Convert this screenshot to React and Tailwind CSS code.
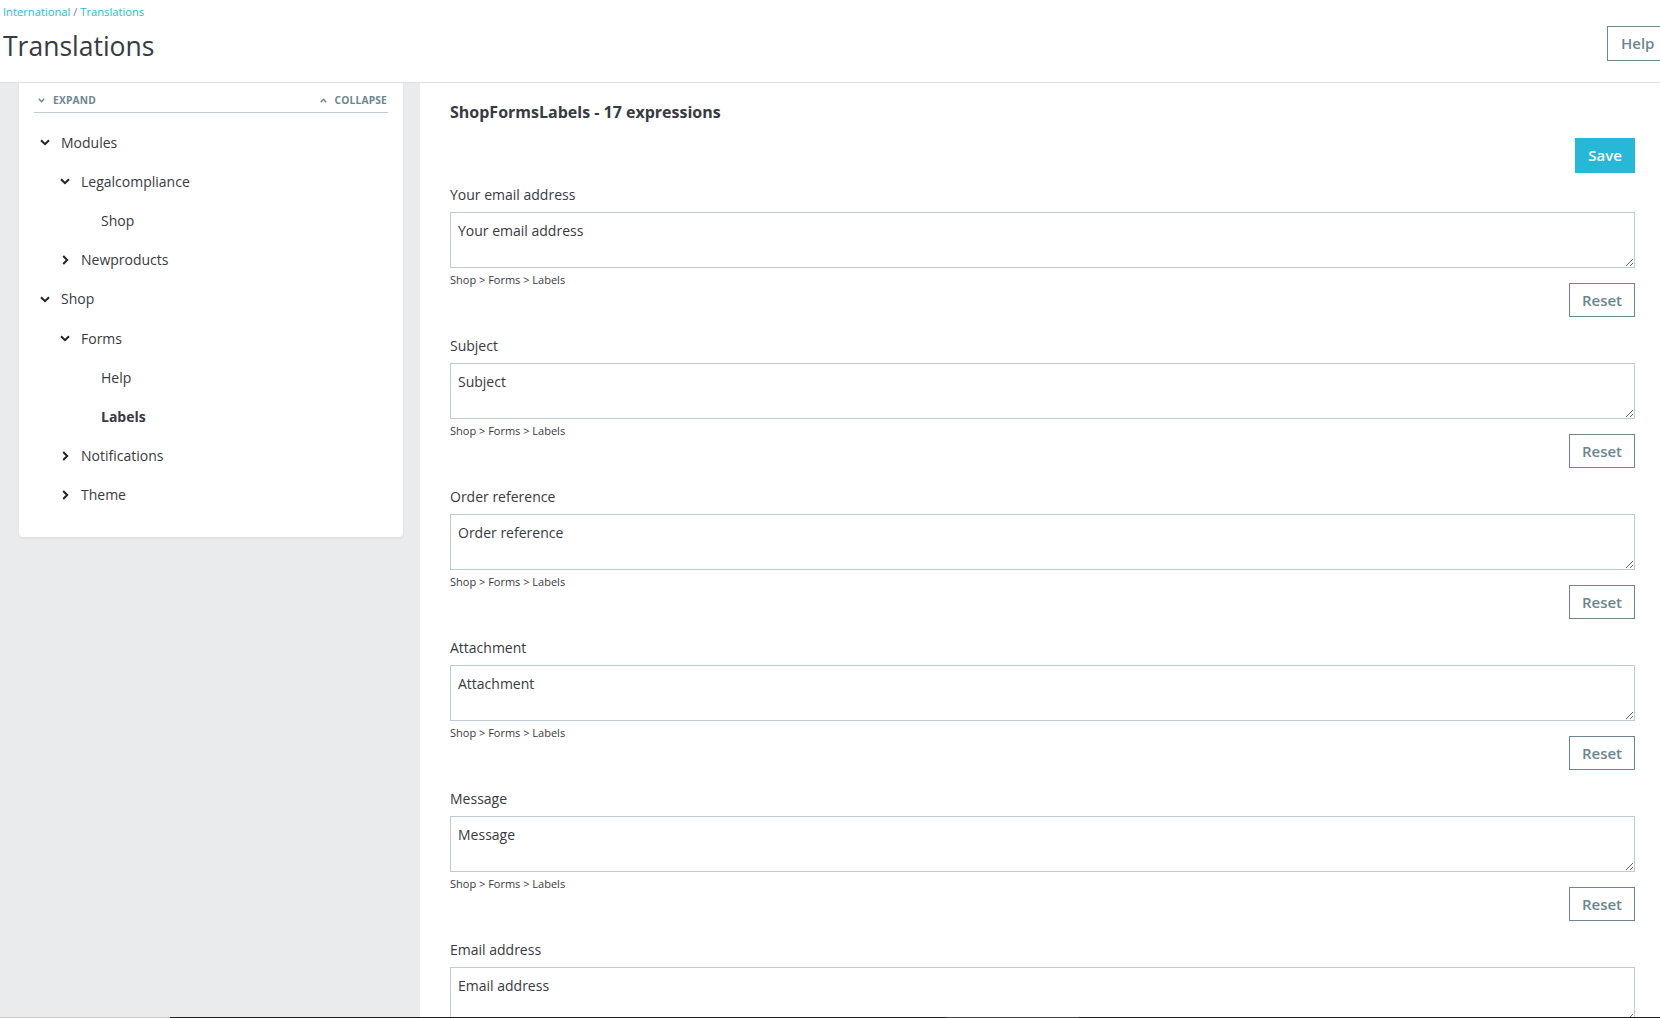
import React from "react";

const tree = [
  { label: "Modules", level: 0, icon: "down" },
  { label: "Legalcompliance", level: 1, icon: "down" },
  { label: "Shop", level: 2 },
  { label: "Newproducts", level: 1, icon: "right" },
  { label: "Shop", level: 0, icon: "down" },
  { label: "Forms", level: 1, icon: "down" },
  { label: "Help", level: 2 },
  { label: "Labels", level: 2, bold: true },
  { label: "Notifications", level: 1, icon: "right" },
  { label: "Theme", level: 1, icon: "right" },
];

const padByLevel = ["pl-[21px]", "pl-[41px]", "pl-[61px]"];

const fields = [
  "Your email address",
  "Subject",
  "Order reference",
  "Attachment",
  "Message",
  "Email address",
];

function ChevDown({ className = "" }) {
  return (
    <svg width="10" height="7" viewBox="0 0 10 7" className={className}>
      <path d="M1 1.2 L5 5.2 L9 1.2" fill="none" stroke="#1f2326" strokeWidth="2" />
    </svg>
  );
}

function ChevRight({ className = "" }) {
  return (
    <svg width="7" height="10" viewBox="0 0 7 10" className={className}>
      <path d="M1.2 1 L5.2 5 L1.2 9" fill="none" stroke="#1f2326" strokeWidth="2" />
    </svg>
  );
}

function SmallChev({ up }) {
  return (
    <svg width="7" height="5" viewBox="0 0 7 5">
      <path
        d={up ? "M0.8 4.2 L3.5 1.3 L6.2 4.2" : "M0.8 0.8 L3.5 3.7 L6.2 0.8"}
        fill="none"
        stroke="#6c868e"
        strokeWidth="1.4"
      />
    </svg>
  );
}

export default function App() {
  return (
    <div className="relative w-[1660px] h-[1018px] overflow-hidden bg-white text-[#363a41] font-['Open_Sans',sans-serif]">
      {/* Header */}
      <div className="h-[83px] border-b border-[#dfdfdf] flex justify-between">
        <div className="pl-[3px] pt-[4px]">
          <div className="text-[11.2px] leading-[16px] text-[#25b9d7]">
            International <span className="text-[#6c868e]">/</span> Translations
          </div>
          <h1 className="mt-[8px] text-[26.5px] leading-[36px] font-normal text-[#363a41]">Translations</h1>
        </div>
        <div className="pt-[26px] -mr-[8px]">
          <button className="h-[35px] w-[61px] border border-[#6c868e] text-[#6c868e] text-[15px] font-semibold text-left pl-[13px] bg-white">
            Help
          </button>
        </div>
      </div>

      {/* Body */}
      <div className="flex h-[935px]">
        {/* Sidebar */}
        <div className="w-[420px] shrink-0 bg-[#eaebec] pl-[19px] pr-[17px]">
          <div className="bg-white rounded-b-[4px] shadow-[0_1px_2px_rgba(0,0,0,0.08)] px-[15px] pt-[7px] pb-[22px]">
            <div className="h-[23px] border-b border-[#bbcdd2] flex justify-between pl-[4px] pr-[1px]">
              <div className="flex items-start gap-[8px] h-[20px]">
                <div className="h-[20px] flex items-center"><SmallChev /></div>
                <span className="text-[10.2px] leading-[20px] font-bold text-[#6c868e] tracking-[0.2px]">EXPAND</span>
              </div>
              <div className="flex items-start gap-[8px] h-[20px]">
                <div className="h-[20px] flex items-center"><SmallChev up /></div>
                <span className="text-[10.2px] leading-[20px] font-bold text-[#6c868e] tracking-[0.2px]">COLLAPSE</span>
              </div>
            </div>
            <div className="pt-[10px] -ml-[15px]">
              {tree.map((t, i) => (
                <div key={i} className={"h-[39.2px] flex items-center " + padByLevel[t.level]}>
                  <div className="w-[21px] shrink-0 flex items-center">
                    {t.icon === "down" && <ChevDown />}
                    {t.icon === "right" && <ChevRight className="ml-[2px]" />}
                  </div>
                  <span className={"text-[14px] leading-[20px] text-[#363a41] " + (t.bold ? "font-bold" : "")}>
                    {t.label}
                  </span>
                </div>
              ))}
            </div>
          </div>
        </div>

        {/* Main */}
        <div className="flex-1 bg-white pl-[30px] pr-[25px] pt-[17px]">
          <h2 className="text-[16px] leading-[24px] font-bold text-[#363a41]">ShopFormsLabels - 17 expressions</h2>
          <div className="flex justify-end mt-[14px]">
            <button className="h-[35px] w-[60px] bg-[#25b9d7] text-white text-[15px] font-semibold">Save</button>
          </div>
          <div className="mt-[11px]">
            {fields.map((f, i) => (
              <div key={i} className="mb-[18px]">
                <div className="pt-[1px] h-[20px] text-[14px] leading-[20px] text-[#363a41]">{f}</div>
                <textarea
                  defaultValue={f}
                  className="mt-[8px] block w-full h-[56px] border border-[#bbcdd2] px-[7px] pt-[8px] text-[14px] leading-[20px] text-[#363a41] outline-none resize-y"
                />
                <div className="mt-[4px] h-[11px] text-[11px] leading-[16px] text-[#363a41]">Shop &gt; Forms &gt; Labels</div>
                <div className="flex justify-end">
                  <button className="h-[34px] w-[66px] border border-[#6c868e] text-[#6c868e] text-[15px] font-semibold bg-white">
                    Reset
                  </button>
                </div>
              </div>
            ))}
          </div>
        </div>
      </div>

      {/* bottom scrollbar remnant */}
      <div className="absolute bottom-0 left-0 w-full h-px flex">
        <div className="w-[170px] bg-[#c6c6c6]" />
        <div className="w-[776px] bg-[#1e1e1e]" />
        <div className="w-[133px] bg-[#454545]" />
        <div className="flex-1 bg-[#1e1e1e]" />
      </div>
    </div>
  );
}
